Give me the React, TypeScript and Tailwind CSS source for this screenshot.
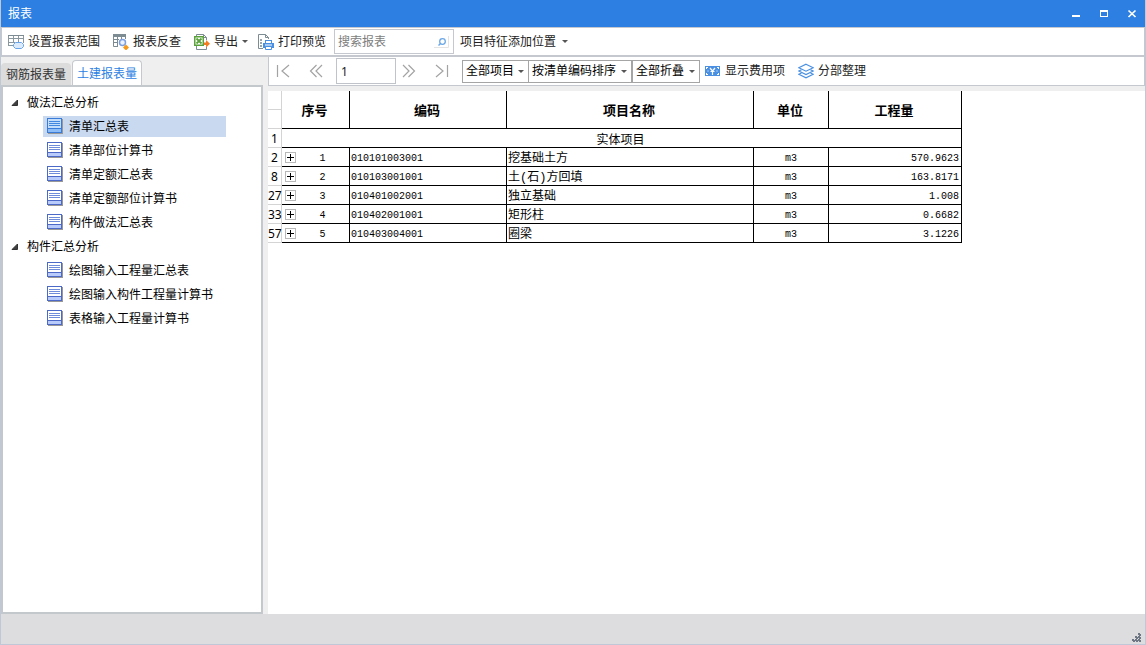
import React, { useState } from 'react';

const RANGOS = ['全部项目'];
const ORDENES = ['按清单编码排序'];
const PLIEGUES = ['全部折叠'];

const grupos = [
  { titulo: '做法汇总分析', items: ['清单汇总表', '清单部位计算书', '清单定额汇总表', '清单定额部位计算书', '构件做法汇总表'] },
  { titulo: '构件汇总分析', items: ['绘图输入工程量汇总表', '绘图输入构件工程量计算书', '表格输入工程量计算书'] },
];

const filas = [
  { fila: 2, codigo: '010101003001', nombre: '挖基础土方', cantidad: '570.9623' },
  { fila: 8, codigo: '010103001001', nombre: '土(石)方回填', cantidad: '163.8171' },
  { fila: 27, codigo: '010401002001', nombre: '独立基础', cantidad: '1.008' },
  { fila: 33, codigo: '010402001001', nombre: '矩形柱', cantidad: '0.6682' },
  { fila: 57, codigo: '010403004001', nombre: '圈梁', cantidad: '3.1226' },
];

const Caret = () => (
  <svg width="6" height="3" viewBox="0 0 6 3" className="shrink-0" fill="#555">
    <path d="M0 0h6L3 3z" />
  </svg>
);

const IconRango = () => (
  <svg width="16" height="16" viewBox="0 0 16 16" fill="none" className="shrink-0">
    <path d="M.5 1v11M.5 4.500h15M.5 8.500H7M.5 11.500H5M5.500 1v8M10.500 1v7M15.500 1v8" stroke="#8b979e" />
    <path d="M0 1h16v1H0z" fill="#7d8b93" />
    <path d="M7.500 8.500h6l2 2v2l-2 2h-6l-2-2v-2z" fill="#dcebfb" stroke="#6aa5ea" />
  </svg>
);

const IconBuscar = () => (
  <svg width="16" height="16" viewBox="0 0 16 16" fill="none" className="shrink-0">
    <path d="M.5 1v11.500H5M.5 8.500H5M4.500 3v9.500M8.500 3v2M12.500 1v4M.5 5.500H6" stroke="#7d8b93" />
    <path d="M0 0h13v3H0z" fill="#7d8b93" />
    <circle cx="9.500" cy="8.500" r="3" fill="#eaf3fd" stroke="#7c9fe0" strokeWidth="1.500" />
    <path d="M13 10.500l3 3-3 3-3-3z" fill="#f59a1b" />
  </svg>
);

const IconExportar = () => (
  <svg width="16" height="16" viewBox="0 0 16 16" fill="none" className="shrink-0">
    <path d="M2.500 2V.5h7l3 3V6M9.500.5v3h3M2.500 12v3.500h10V13" stroke="#7d8b93" />
    <rect x=".75" y="2.750" width="8.500" height="8.500" fill="#fff" stroke="#5ba23c" strokeWidth="1.500" />
    <path d="M2.500 4.500l5 5M7.500 4.500l-5 5" stroke="#5ba23c" strokeWidth="1.800" />
    <path d="M10 8.500h2V6l4 3.750-4 3.750V11h-2z" fill="#f47b20" />
  </svg>
);

const IconImprimir = () => (
  <svg width="16" height="16" viewBox="0 0 16 16" fill="none" className="shrink-0">
    <path d="M10.500 5V3.500l-3-3h-7v14H5M7.500.5v3h3" stroke="#7d8b93" />
    <path d="M2 5h2v2H2zM2 8h2v2H2zM2 11h2v2H2z" fill="#9aa5ab" />
    <path d="M7 6h7v3h2v5H5V9h2z" fill="#4a90e2" />
    <path d="M8 7h5v2H8zM7 10.500h7v1H7z" fill="#fff" />
    <path d="M7.500 12.500h6v3h-6z" fill="#fff" stroke="#4a90e2" />
  </svg>
);

const IconCosto = () => (
  <svg width="16" height="16" viewBox="0 0 16 16" fill="none" className="shrink-0">
    <path d="M0 3h15v10H0z" fill="#4a90e2" />
    <path d="M5 5l2.500 3L10 5M7.500 8v4M5.500 8.500h4" stroke="#fff" strokeWidth="1.200" />
    <path d="M1 4.500h2M12 4.500h2M1 11.500h2M12 11.500h2M1.500 4v2M13.500 4v2M1.500 10v2M13.500 10v2" stroke="#fff" />
    <path d="M2.500 8h1M11.500 8h1" stroke="#fff" />
  </svg>
);

const IconCapas = () => (
  <svg width="16" height="16" viewBox="0 0 16 16" fill="none" stroke="#4a90e2" strokeWidth="1.200" className="shrink-0">
    <path d="M8 1.200l7.200 3.500L8 8.200.8 4.700z" />
    <path d="M3.500 6.700L.8 8 8 11.500 15.200 8l-2.700-1.300" />
    <path d="M3.500 10L.8 11.300 8 14.800l7.200-3.500L12.500 10" />
  </svg>
);

const IconInforme = ({ activo }: { activo: boolean }) => (
  <svg width="16" height="16" viewBox="0 0 16 16" fill="none" shapeRendering="crispEdges" className="shrink-0">
    <path d="M1 15h14V1h1v15H1z" fill="#999" />
    <path d="M0 0h15v15H0z" fill={activo ? '#3a7bd8' : '#4d69c8'} />
    <path d="M1 1h13v9H1z" fill={activo ? '#c3ddfb' : '#fff'} />
    <path d="M1 11h13v3H1z" fill={activo ? '#8dbdf8' : '#b9cbfb'} />
    <path d="M2 3h11v1H2zM2 5h11v1H2zM2 7h11v1H2z" fill={activo ? '#4287e0' : '#6f8cda'} />
  </svg>
);

type BotonProps = { icono?: React.ReactNode; texto: string; className?: string; menu?: boolean };

const Boton = ({ icono, texto, className = 'px-[5px]', menu }: BotonProps) => (
  <button type="button" className={`flex h-6 shrink-0 items-center gap-1 whitespace-nowrap hover:bg-[#e8f1fc] ${className}`}>
    {icono}
    <span>{texto}</span>
    {menu && <Caret />}
  </button>
);

const BotonNav = ({ titulo, d }: { titulo: string; d: string }) => (
  <button type="button" aria-label={titulo} className="flex h-6 w-[26px] shrink-0 items-center justify-center hover:bg-[#e8f1fc]">
    <svg width="14" height="14" viewBox="0 0 14 14" fill="none" stroke="#a3a3a3" strokeWidth="1.200">
      <path d={d} />
    </svg>
  </button>
);

const Selector = ({ titulo, opciones, className }: { titulo: string; opciones: string[]; className: string }) => (
  <div className={`relative flex shrink-0 items-center ${className}`}>
    <select aria-label={titulo} className="h-[23px] w-full appearance-none border border-[#a5a5a5] bg-white pl-[3px] text-black outline-none">
      {opciones.map((o) => (
        <option key={o}>{o}</option>
      ))}
    </select>
    <span className="pointer-events-none absolute right-[5px]"><Caret /></span>
  </div>
);

export default function App() {
  const [activo, setActivo] = useState('清单汇总表');
  const [pagina, setPagina] = useState('1');
  const [busqueda, setBusqueda] = useState('');

  return (
    <div className="flex h-screen flex-col overflow-hidden border-x border-b border-[#c0c7d6] bg-[#efefef] font-['Noto_Sans','Noto_Sans_CJK_SC',sans-serif] text-xs leading-4 text-[#222]">
      <header className="-mx-px flex h-[27px] shrink-0 items-center justify-between bg-[#2d7fe2] pl-2 pr-2 text-white">
        <h1>报表</h1>
        <div className="flex gap-4">
          <button type="button" aria-label="最小化">
            <svg width="12" height="12" viewBox="0 0 12 12"><path d="M2 7h8v2H2z" fill="#fff" /></svg>
          </button>
          <button type="button" aria-label="最大化">
            <svg width="12" height="12" viewBox="0 0 12 12"><path d="M2 2h8v7H2zM3 4v4h6V4z" fill="#fff" fillRule="evenodd" /></svg>
          </button>
          <button type="button" aria-label="关闭">
            <svg width="12" height="12" viewBox="0 0 12 12" stroke="#fff" strokeWidth="1.700"><path d="M2.500 2.500l7 6.500M9.500 2.500L2.500 9" /></svg>
          </button>
        </div>
      </header>

      <div className="flex h-[30px] shrink-0 items-center gap-[3px] border-x border-b-2 border-t border-[#c5c9cf] bg-white pl-px">
        <Boton icono={<IconRango />} texto="设置报表范围" />
        <Boton icono={<IconBuscar />} texto="报表反查" />
        <Boton icono={<IconExportar />} texto="导出" menu className="pl-[5px] pr-0.5" />
        <Boton icono={<IconImprimir />} texto="打印预览" />
        <label className="flex h-[25px] w-[120px] shrink-0 items-center border border-[#c5c9cf] pl-[3px] pr-1">
          <input
            aria-label="搜索报表"
            value={busqueda}
            onChange={(e) => setBusqueda(e.target.value)}
            placeholder="搜索报表"
            className="min-w-0 flex-1 outline-none placeholder:text-[#7d7d7d]"
          />
          <svg width="15" height="12" viewBox="0 0 15 12" fill="none">
            <path d="M14.500 0v11.500H0" stroke="#e4e4e4" />
            <circle cx="8.500" cy="5.500" r="2.800" stroke="#6ba7e6" strokeWidth="1.300" />
            <path d="M6.500 7.500L4.500 9.500" stroke="#6ba7e6" strokeWidth="1.500" />
          </svg>
        </label>
        <Boton texto="项目特征添加位置" menu className="gap-[6px] pl-[3px] pr-1" />
      </div>

      <div className="flex min-h-0 flex-1">
        <aside className="flex w-[262px] shrink-0 flex-col">
          <div role="tablist" className="flex h-7 shrink-0 items-end">
            <button type="button" role="tab" aria-selected="false" className="h-[22px] w-[70px] rounded-t bg-[#dcdcdc] pt-0.5 text-[#333]">钢筋报表量</button>
            <button type="button" role="tab" aria-selected="true" className="ml-px h-[25px] w-[70px] rounded-t border border-b-0 border-[#c5c9cf] bg-white pt-0.5 text-[#2d7fe2]">土建报表量</button>
          </div>
          <nav className="flex-1 overflow-auto border-2 border-[#c3c8cd] bg-white pt-[3px]">
            {grupos.map((g) => (
              <section key={g.titulo}>
                <h2 className="flex h-6 items-center gap-2 pl-2 pt-0.5 text-black">
                  <svg width="8" height="8" viewBox="0 0 8 8"><path d="M6.500 1v5.500H1z" fill="#404040" stroke="#333" /></svg>
                  {g.titulo}
                </h2>
                <ul>
                  {g.items.map((item) => (
                    <li key={item} className="h-6 pl-10 pt-0.5">
                      <button
                        type="button"
                        onClick={() => setActivo(item)}
                        className={`flex h-[21px] w-[183px] items-start gap-[6px] whitespace-nowrap pl-1 pt-0.5 leading-[18px] text-black ${item === activo ? 'bg-[#c9d9f0]' : ''}`}
                      >
                        <IconInforme activo={item === activo} />
                        {item}
                      </button>
                    </li>
                  ))}
                </ul>
              </section>
            ))}
          </nav>
        </aside>

        <main className="ml-[5px] flex min-w-0 flex-1 flex-col">
          <div className="flex h-[29px] shrink-0 items-center border-x border-b border-[#c5c9cf] bg-white pl-px">
            <div className="flex items-center gap-[7px]">
              <BotonNav titulo="首页" d="M1.500 1v12M13 1L6 7l7 6" />
              <BotonNav titulo="上一页" d="M7.500 1l-6 6 6 6M13 1L7 7l6 6" />
              <input
                aria-label="页码"
                value={pagina}
                onChange={(e) => setPagina(e.target.value)}
                className="h-[26px] w-[60px] border border-[#c0c4ca] pl-1 outline-none"
              />
            </div>
            <div className="flex items-center gap-[7px]">
              <BotonNav titulo="下一页" d="M1 1l6 6-6 6M6.500 1l6 6-6 6" />
              <BotonNav titulo="末页" d="M1 1l7 6-7 6M12.500 1v12" />
            </div>
            <Selector titulo="项目范围" opciones={RANGOS} className="ml-[7px] w-[67px]" />
            <Selector titulo="排序方式" opciones={ORDENES} className="-ml-px w-[104px]" />
            <Selector titulo="折叠方式" opciones={PLIEGUES} className="w-[68px]" />
            <Boton icono={<IconCosto />} texto="显示费用项" />
            <Boton icono={<IconCapas />} texto="分部整理" className="ml-[3px] px-[5px]" />
          </div>

          <div className="mt-[5px] min-h-0 flex-1 overflow-auto bg-white text-black">
            <table className="w-[694px] table-fixed border-separate border-spacing-0 [&_td]:border-b [&_td]:border-r [&_th]:border-b [&_th]:border-r">
              <colgroup>
                <col className="w-[14px]" />
                <col className="w-[68px]" />
                <col className="w-[157px]" />
                <col className="w-[247px]" />
                <col className="w-[75px]" />
                <col className="w-[133px]" />
              </colgroup>
              <thead className="text-[13px]">
                <tr className="h-[19px]">
                  <td className="border-[#d4d4d4]" />
                  <th rowSpan={2} className="border-black pr-0.5">序号</th>
                  <th rowSpan={2} className="border-black pr-0.5">编码</th>
                  <th rowSpan={2} className="border-black pr-0.5">项目名称</th>
                  <th rowSpan={2} className="border-black pr-0.5">单位</th>
                  <th rowSpan={2} className="border-black pr-0.5">工程量</th>
                </tr>
                <tr className="h-[19px]">
                  <td className="border-[#d4d4d4]" />
                </tr>
              </thead>
              <tbody className="leading-[14px]">
                <tr className="h-[19px]">
                  <th className="border-[#d4d4d4] pt-0.5 font-normal">1</th>
                  <td colSpan={5} className="border-black pr-0.5 pt-[3px] text-center">实体项目</td>
                </tr>
                {filas.map((f, i) => (
                  <tr key={f.fila} className="h-[19px]">
                    <th className="border-[#d4d4d4] pt-0.5 font-normal">{f.fila}</th>
                    <td className="border-black">
                      <div className="flex items-center pl-[3px]">
                        <button type="button" aria-label="展开" className="flex size-[11px] items-center justify-center border border-[#b8b8b8] bg-white">
                          <svg width="7" height="7" viewBox="0 0 7 7" shapeRendering="crispEdges"><path d="M0 3h7v1H0zM3 0h1v7H3z" /></svg>
                        </button>
                        <span className="flex-1 pt-[3px] text-center font-['Liberation_Mono',monospace] text-[10px] leading-[14px]">{i + 1}</span>
                      </div>
                    </td>
                    <td className="border-black pl-px pt-1 font-['Liberation_Mono',monospace] text-[10px] leading-[14px]">{f.codigo}</td>
                    <td className="border-black pl-px pt-1 font-['Liberation_Mono','Noto_Sans_CJK_SC',monospace] leading-[14px]">{f.nombre}</td>
                    <td className="border-black pt-1 text-center font-['Liberation_Mono',monospace] text-[10px] leading-[14px]">m3</td>
                    <td className="border-black pr-0.5 pt-1 text-right font-['Liberation_Mono',monospace] text-[10px] leading-[14px]">{f.cantidad}</td>
                  </tr>
                ))}
              </tbody>
            </table>
          </div>
        </main>
      </div>

      <footer className="flex h-[30px] shrink-0 items-end justify-end bg-[#dddddf] pb-0.5 pr-[3px]">
        <svg width="10" height="10" viewBox="0 0 10 10" fill="#6e7783" shapeRendering="crispEdges">
          <path d="M6 1h2v2H6zM7 2h2v2H7zM3 4h2v2H3zM4 5h2v2H4zM6 4h2v2H6zM7 5h2v2H7zM0 7h2v2H0zM1 8h2v2H1zM3 7h2v2H3zM4 8h2v2H4zM6 7h2v2H6zM7 8h2v2H7z" />
        </svg>
      </footer>
    </div>
  );
}
